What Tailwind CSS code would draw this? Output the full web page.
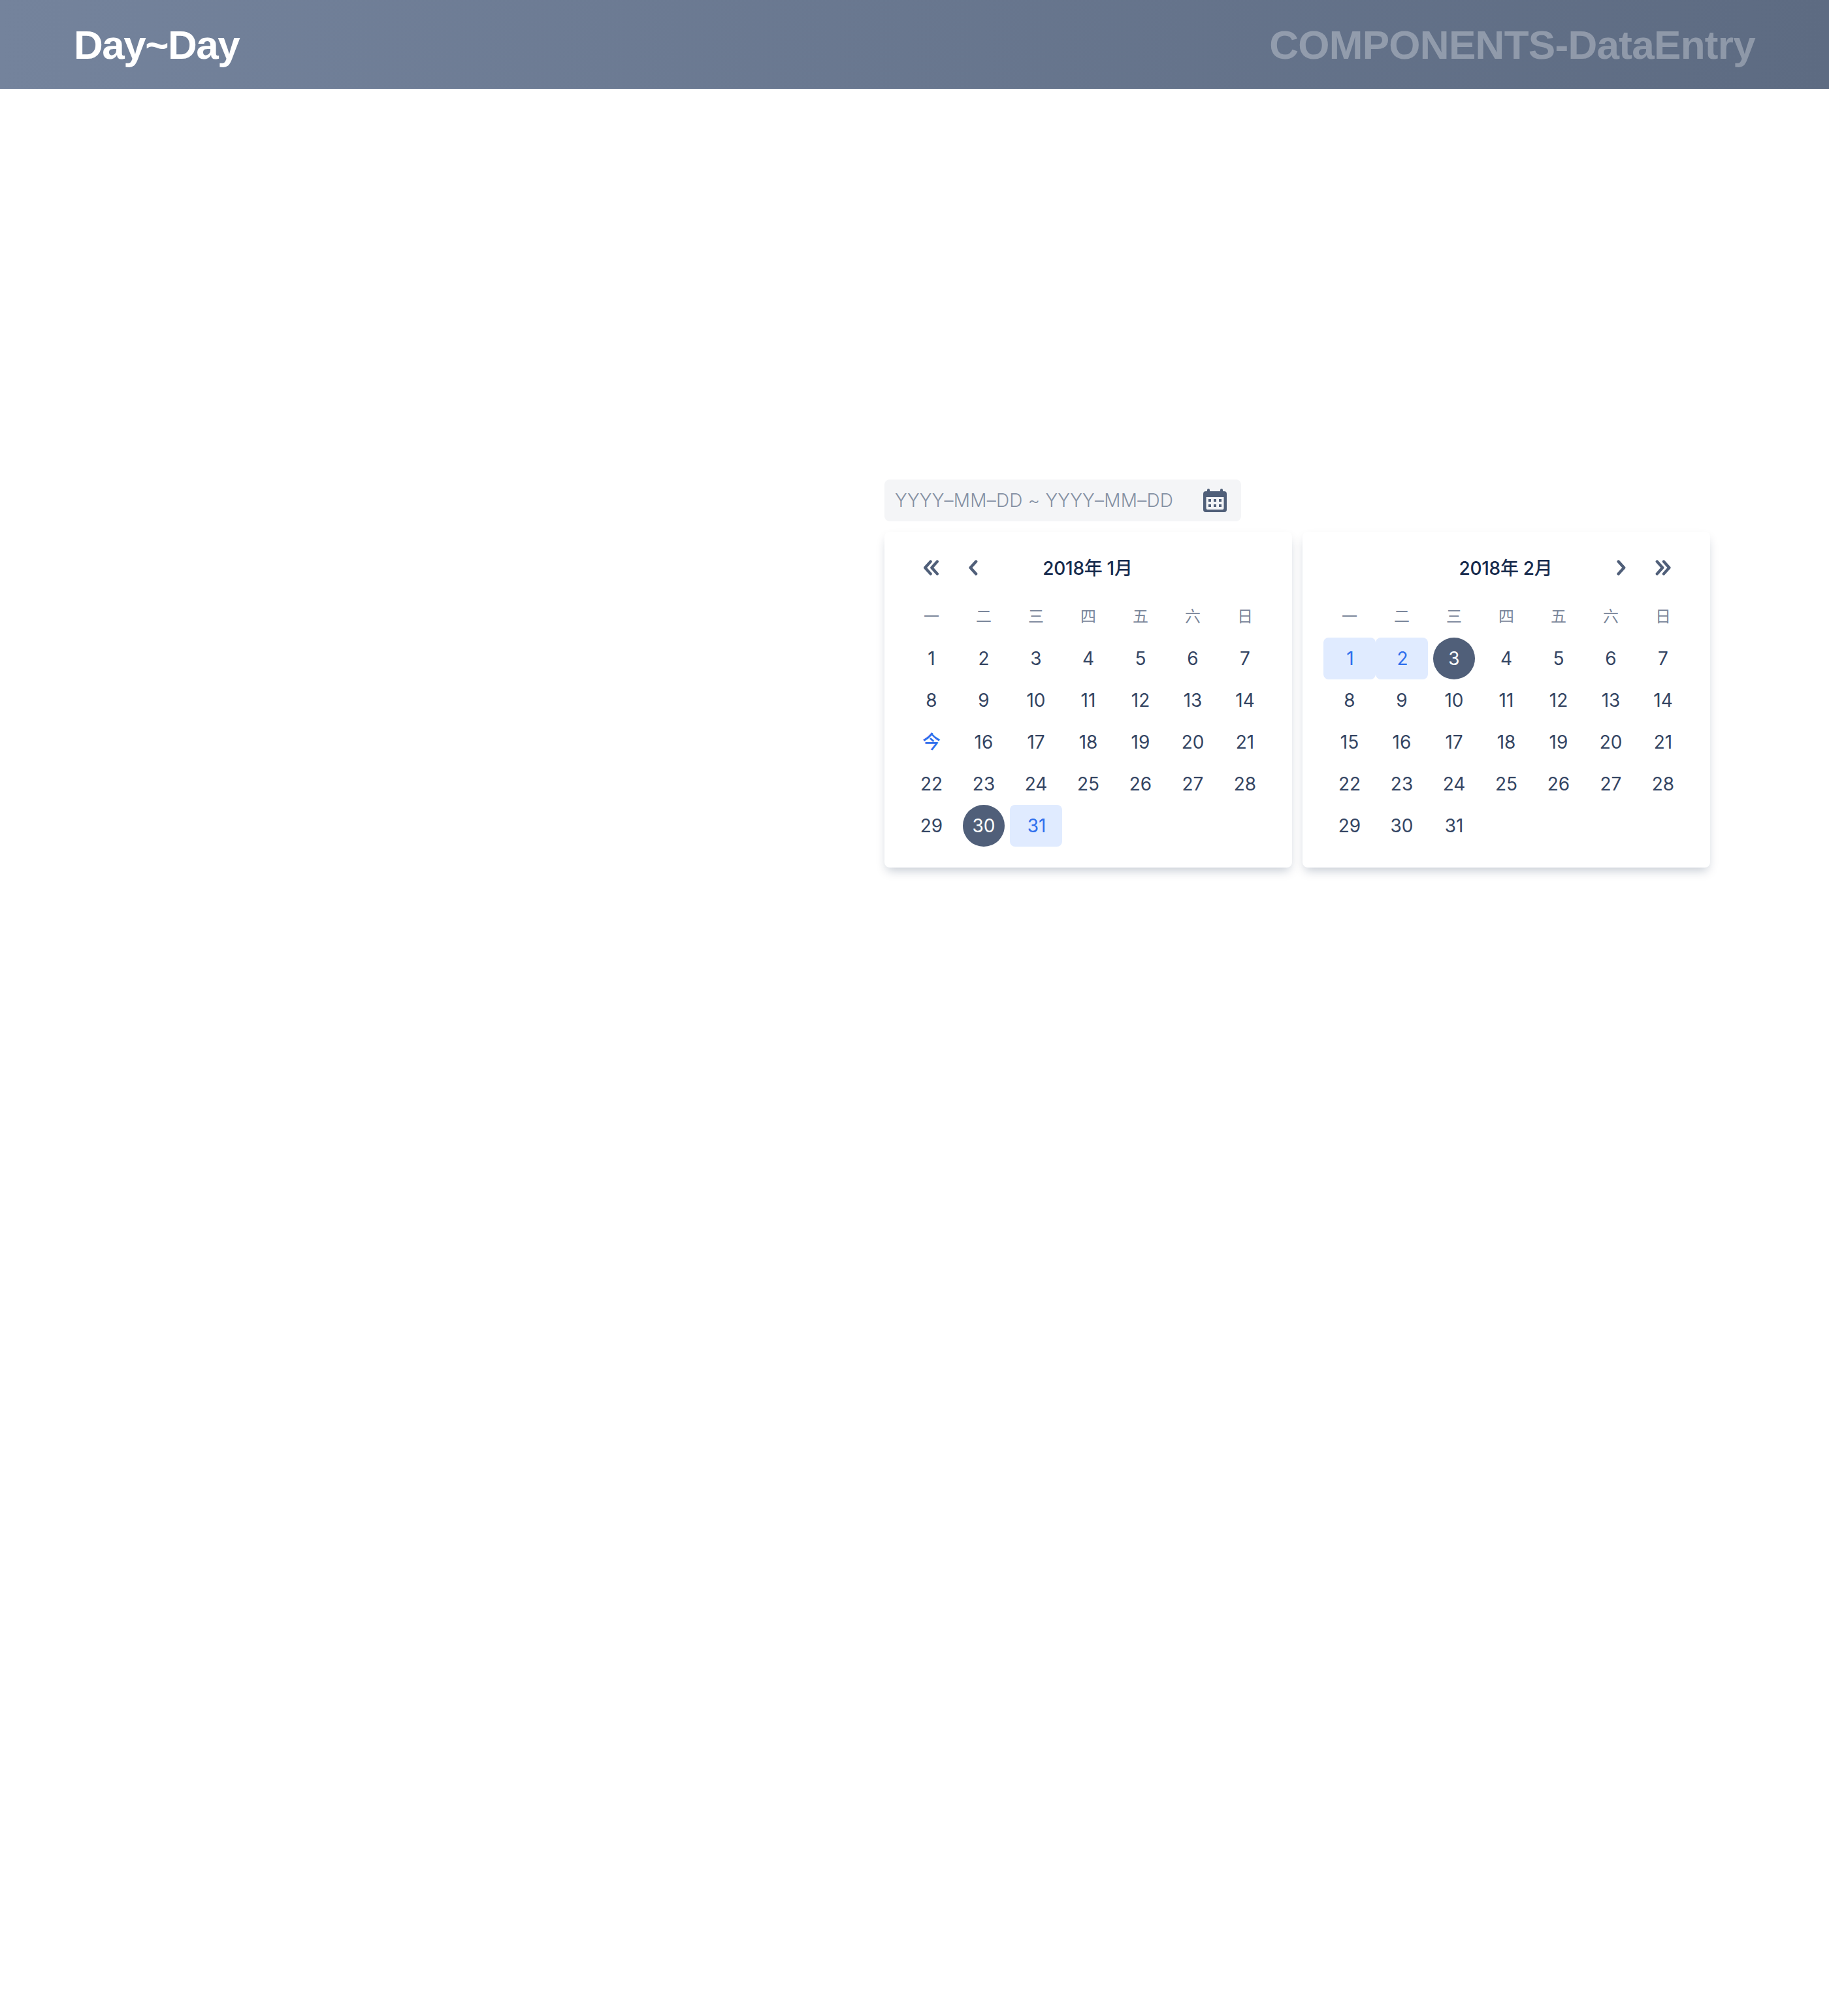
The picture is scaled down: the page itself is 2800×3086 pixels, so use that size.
<!DOCTYPE html>
<html lang="zh">
<head>
<meta charset="utf-8">
<title>Day~Day</title>
<script src="https://cdn.jsdelivr.net/npm/@tailwindcss/browser@4"></script>
</head>
<body class="bg-white font-['Inter','Noto_Sans_CJK_SC',sans-serif]">
<div class="flex h-[3086px] w-[2800px] flex-col">
  <header class="flex h-[136px] items-center justify-between bg-linear-to-r from-[#74839c] to-[#5d6b82] pl-[113px] pr-[113px] pt-px font-['Liberation_Sans',sans-serif] text-[62px] leading-none font-bold">
    <h1 class="tracking-[-1.5px] text-white">Day~Day</h1>
    <p class="tracking-[-0.7px] text-white/30">COMPONENTS-DataEntry</p>
  </header>
  <main class="flex flex-col gap-4 pl-[1354px] pt-[598px]">
    <div class="flex h-16 w-[546px] items-center justify-between rounded-lg bg-[#f4f5f7] pl-4 pr-[22px] text-[28px] font-light text-[#8490a3]">
      <span class="tracking-[0.24px]">YYYY–MM–DD ~ YYYY–MM–DD</span>
      <svg class="h-9 w-9" viewBox="0 0 36 36" fill="#505f79">
        <path fill-rule="evenodd" d="M6 4V2a2 2 0 0 1 4 0v2h16V2a2 2 0 0 1 4 0v2h2a4 4 0 0 1 4 4v24a4 4 0 0 1-4 4H4a4 4 0 0 1-4-4V8a4 4 0 0 1 4-4zM4.500 13v17a2 2 0 0 0 2 2h23a2 2 0 0 0 2-2V13z"/>
        <path d="M8 16h4v4H8zm8 0h4v4h-4zm8 0h4v4h-4zM8 24h4v4H8zm8 0h4v4h-4zm8 0h4v4h-4z"/>
      </svg>
    </div>
    <div class="flex gap-4">
      <section class="h-[514px] w-[624px] rounded-lg bg-white px-8 pt-[23px] shadow-[0_8px_16px_-4px_rgba(9,30,66,0.25)]">
        <div class="grid h-16 grid-cols-[64px_64px_1fr_64px_64px] items-center px-2">
          <svg class="mx-auto h-6 w-8" viewBox="0 0 32 24" fill="none" stroke="#505f79" stroke-width="4.400" stroke-linecap="round" stroke-linejoin="round"><path d="M14.600 2.600 6.200 12l8.400 9.400M24.800 2.600 16.400 12l8.400 9.400"/></svg>
          <svg class="mx-auto h-6 w-8" viewBox="0 0 32 24" fill="none" stroke="#505f79" stroke-width="4.400" stroke-linecap="round" stroke-linejoin="round"><path d="M20.200 2.600 11.600 12l8.600 9.400"/></svg>
          <h2 class="pt-0.5 pr-0.5 text-center text-[28px] font-medium tracking-[-0.3px] whitespace-nowrap text-[#172b4d]">2018年 1月</h2>
        </div>
        <div class="grid grid-cols-7 justify-items-center pt-2.5 text-[24px] leading-[65px] font-normal text-[#7a869a]"><span>一</span><span>二</span><span>三</span><span>四</span><span>五</span><span>六</span><span>日</span></div>
        <div data-days="jan" class="grid grid-cols-7 justify-items-center text-center text-[28px] leading-16 font-normal text-[#344563]"></div>
      </section>
      <section class="h-[514px] w-[624px] rounded-lg bg-white px-8 pt-[23px] shadow-[0_8px_16px_-4px_rgba(9,30,66,0.25)]">
        <div class="grid h-16 grid-cols-[64px_64px_1fr_64px_64px] items-center px-2">
          <h2 class="col-start-3 pt-0.5 pr-0.5 text-center text-[28px] font-medium tracking-[-0.3px] whitespace-nowrap text-[#172b4d]">2018年 2月</h2>
          <svg class="mx-auto h-6 w-8" viewBox="0 0 32 24" fill="none" stroke="#505f79" stroke-width="4.400" stroke-linecap="round" stroke-linejoin="round"><path d="M11.600 2.600 20.200 12l-8.600 9.400"/></svg>
          <svg class="mx-auto h-6 w-8" viewBox="0 0 32 24" fill="none" stroke="#505f79" stroke-width="4.400" stroke-linecap="round" stroke-linejoin="round"><path d="M6.800 2.600 15.200 12l-8.400 9.400M17 2.600 25.400 12 17 21.400"/></svg>
        </div>
        <div class="grid grid-cols-7 justify-items-center pt-2.5 text-[24px] leading-[65px] font-normal text-[#7a869a]"><span>一</span><span>二</span><span>三</span><span>四</span><span>五</span><span>六</span><span>日</span></div>
        <div data-days="feb" class="grid grid-cols-7 justify-items-center text-center text-[28px] leading-16 font-normal text-[#344563]"></div>
      </section>
    </div>
  </main>
</div>
<script>
  const marks = {
    jan: { 15: 'today', 30: 'end', 31: 'range' },
    feb: { 1: 'range', 2: 'range', 3: 'end' }
  };
  const styles = {
    today: 'w-20 font-medium text-[#2f6fed]',
    end: 'w-16 rounded-full bg-[#505f79] text-white',
    range: 'w-20 rounded-lg bg-[#e0ebff] pl-0.5 text-[#2f6fed]',
    plain: 'w-20'
  };
  for (const month of Object.keys(marks)) {
    const grid = document.querySelector('[data-days="' + month + '"]');
    for (let d = 1; d <= 31; d++) {
      const kind = marks[month][d] || 'plain';
      const cell = document.createElement('span');
      cell.className = 'h-16 ' + styles[kind];
      cell.textContent = kind === 'today' ? '今' : d;
      grid.append(cell);
    }
  }
</script>
</body>
</html>
